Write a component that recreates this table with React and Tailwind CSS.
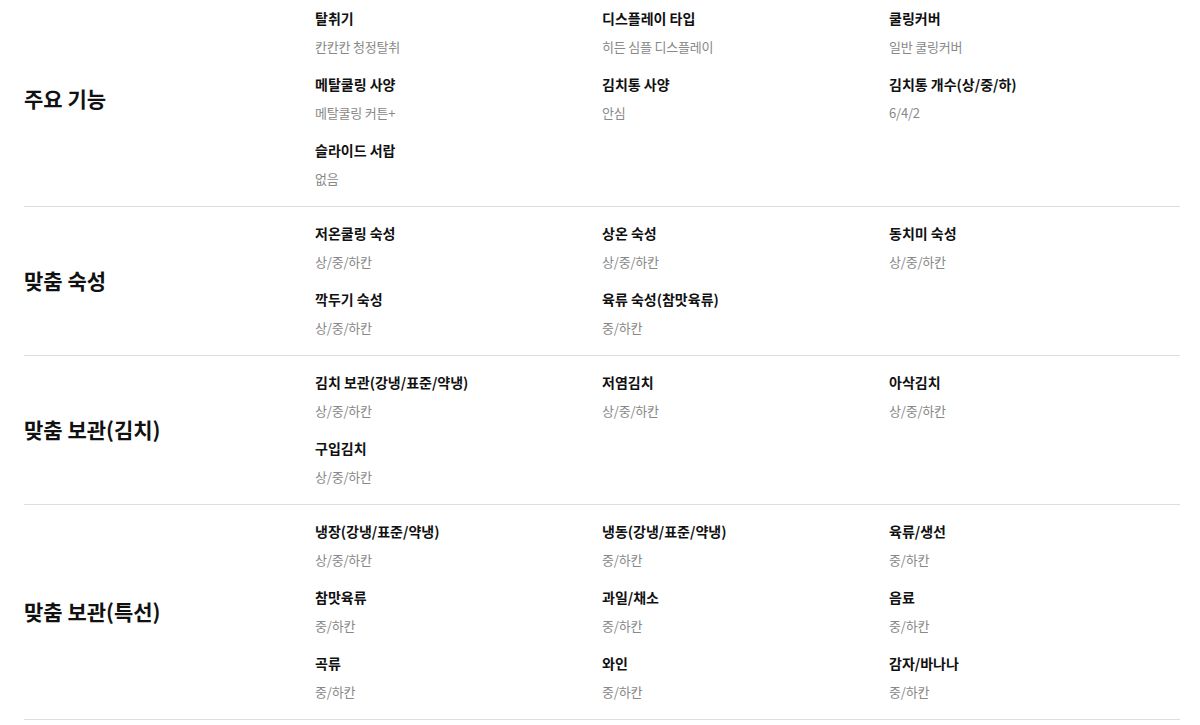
const sections = [
  {
    title: "주요 기능",
    first: true,
    items: [
      ["탈취기", "칸칸칸 청정탈취"],
      ["디스플레이 타입", "히든 심플 디스플레이"],
      ["쿨링커버", "일반 쿨링커버"],
      ["메탈쿨링 사양", "메탈쿨링 커튼+"],
      ["김치통 사양", "안심"],
      ["김치통 개수(상/중/하)", "6/4/2"],
      ["슬라이드 서랍", "없음"],
    ],
  },
  {
    title: "맞춤 숙성",
    items: [
      ["저온쿨링 숙성", "상/중/하칸"],
      ["상온 숙성", "상/중/하칸"],
      ["동치미 숙성", "상/중/하칸"],
      ["깍두기 숙성", "상/중/하칸"],
      ["육류 숙성(참맛육류)", "중/하칸"],
    ],
  },
  {
    title: "맞춤 보관(김치)",
    items: [
      ["김치 보관(강냉/표준/약냉)", "상/중/하칸"],
      ["저염김치", "상/중/하칸"],
      ["아삭김치", "상/중/하칸"],
      ["구입김치", "상/중/하칸"],
    ],
  },
  {
    title: "맞춤 보관(특선)",
    items: [
      ["냉장(강냉/표준/약냉)", "상/중/하칸"],
      ["냉동(강냉/표준/약냉)", "중/하칸"],
      ["육류/생선", "중/하칸"],
      ["참맛육류", "중/하칸"],
      ["과일/채소", "중/하칸"],
      ["음료", "중/하칸"],
      ["곡류", "중/하칸"],
      ["와인", "중/하칸"],
      ["감자/바나나", "중/하칸"],
    ],
  },
];

export default function App() {
  return (
    <div
      className="w-[1200px] h-[725px] bg-white pl-6 pr-5 overflow-hidden"
      style={{ fontFamily: '"Noto Sans CJK KR", "Noto Sans", sans-serif' }}
    >
      {sections.map((s) => (
        <div
          key={s.title}
          className={`flex border-b border-[#dddddd] ${s.first ? "pt-2" : "pt-4"} pb-[17px]`}
        >
          <div className="w-[291px] shrink-0 flex items-center">
            <h3 className="text-[21px] font-bold text-[#111] leading-none">{s.title}</h3>
          </div>
          <div className="flex-1 grid grid-cols-[287px_287px_1fr] gap-y-[17px]">
            {s.items.map(([l, v]) => (
              <div key={l} className="flex flex-col">
                <div className="text-[14px] leading-[20px] font-bold text-[#111]">{l}</div>
                <div className="mt-[9px] text-[13px] leading-[20px] text-[#888] tracking-[-0.2px]">{v}</div>
              </div>
            ))}
          </div>
        </div>
      ))}
    </div>
  );
}
